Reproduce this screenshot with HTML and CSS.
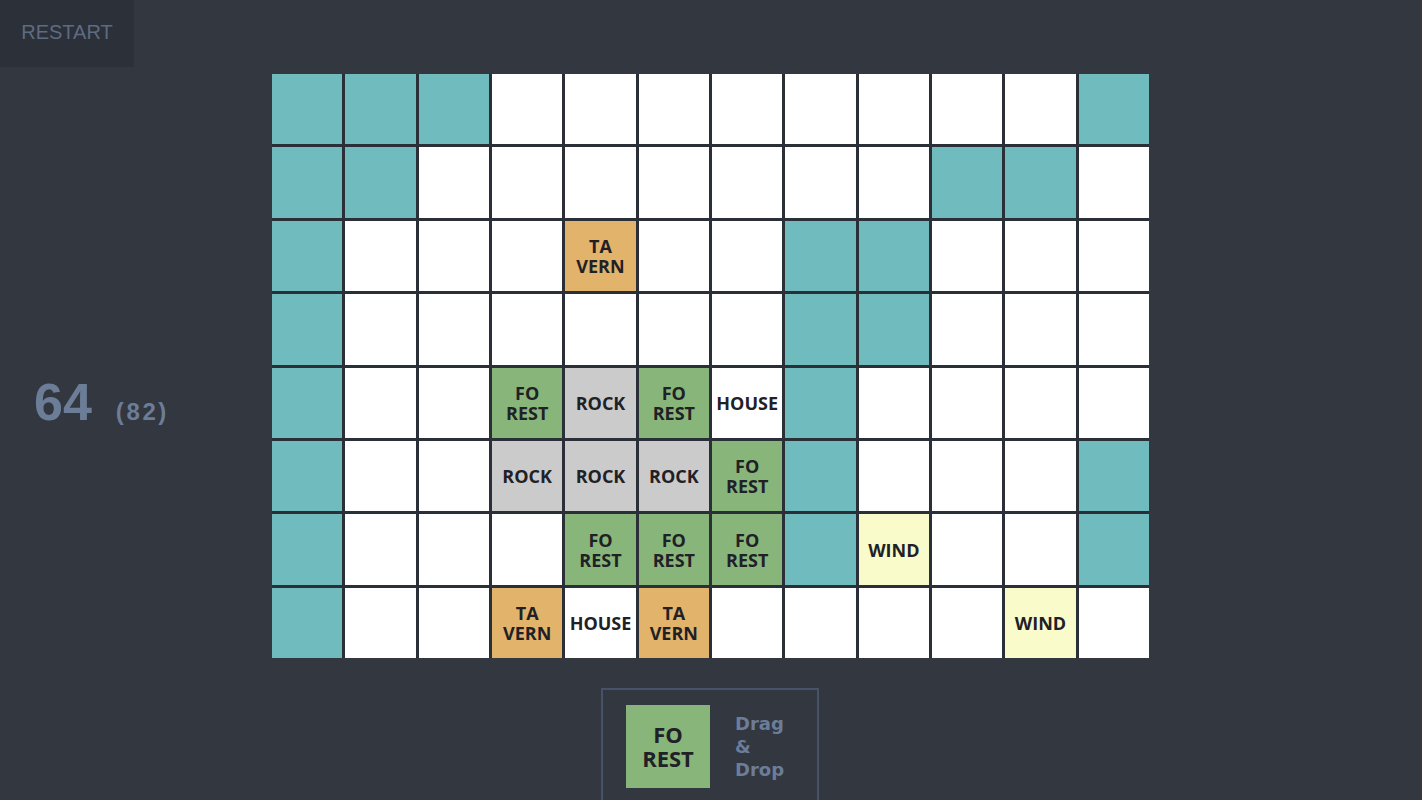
FILE: index.html
```html
<!DOCTYPE html>
<html>
<head>
<meta charset="utf-8">
<link rel="stylesheet" href="styles.css">
</head>
<body>
<header class="topbar">
  <button class="restart">RESTART</button>
</header>
<main class="board-area">
  <div class="score"><span class="score-now">64</span><span class="score-best">(82)</span></div>
  <div class="grid">
    <div class="cell water"></div><div class="cell water"></div><div class="cell water"></div><div class="cell"></div><div class="cell"></div><div class="cell"></div><div class="cell"></div><div class="cell"></div><div class="cell"></div><div class="cell"></div><div class="cell"></div><div class="cell water"></div>

    <div class="cell water"></div><div class="cell water"></div><div class="cell"></div><div class="cell"></div><div class="cell"></div><div class="cell"></div><div class="cell"></div><div class="cell"></div><div class="cell"></div><div class="cell water"></div><div class="cell water"></div><div class="cell"></div>

    <div class="cell water"></div><div class="cell"></div><div class="cell"></div><div class="cell"></div><div class="cell tavern">TA<br>VERN</div><div class="cell"></div><div class="cell"></div><div class="cell water"></div><div class="cell water"></div><div class="cell"></div><div class="cell"></div><div class="cell"></div>

    <div class="cell water"></div><div class="cell"></div><div class="cell"></div><div class="cell"></div><div class="cell"></div><div class="cell"></div><div class="cell"></div><div class="cell water"></div><div class="cell water"></div><div class="cell"></div><div class="cell"></div><div class="cell"></div>

    <div class="cell water"></div><div class="cell"></div><div class="cell"></div><div class="cell forest">FO<br>REST</div><div class="cell rock">ROCK</div><div class="cell forest">FO<br>REST</div><div class="cell house">HOUSE</div><div class="cell water"></div><div class="cell"></div><div class="cell"></div><div class="cell"></div><div class="cell"></div>

    <div class="cell water"></div><div class="cell"></div><div class="cell"></div><div class="cell rock">ROCK</div><div class="cell rock">ROCK</div><div class="cell rock">ROCK</div><div class="cell forest">FO<br>REST</div><div class="cell water"></div><div class="cell"></div><div class="cell"></div><div class="cell"></div><div class="cell water"></div>

    <div class="cell water"></div><div class="cell"></div><div class="cell"></div><div class="cell"></div><div class="cell forest">FO<br>REST</div><div class="cell forest">FO<br>REST</div><div class="cell forest">FO<br>REST</div><div class="cell water"></div><div class="cell wind">WIND</div><div class="cell"></div><div class="cell"></div><div class="cell water"></div>

    <div class="cell water"></div><div class="cell"></div><div class="cell"></div><div class="cell tavern">TA<br>VERN</div><div class="cell house">HOUSE</div><div class="cell tavern">TA<br>VERN</div><div class="cell"></div><div class="cell"></div><div class="cell"></div><div class="cell"></div><div class="cell wind">WIND</div><div class="cell"></div>
  </div>
  <div class="spacer"></div>
</main>
<footer class="tray-wrap">
  <div class="tray">
    <div class="tile forest">FO<br>REST</div>
    <div class="hint">Drag<br>&amp;<br>Drop</div>
  </div>
</footer>
</body>
</html>
```

FILE: styles.css
```css
html, body {
  margin: 0;
  padding: 0;
  background: #333740;
  height: 100%;
  overflow: hidden;
}

body {
  font-family: "Liberation Sans", Arial, sans-serif;
}

.topbar {
  height: 67px;
  display: flex;
}

.restart {
  width: 134px;
  height: 67px;
  margin: 0;
  border: none;
  background: #2c3038;
  color: #5d6b83;
  font-family: "Liberation Sans", Arial, sans-serif;
  font-size: 20px;
  padding: 0 0 2px 0;
  cursor: pointer;
}

.board-area {
  display: grid;
  grid-template-columns: 272px 877px 1fr;
  margin-top: 7px;
}

.score {
  align-self: center;
  padding: 72px 0 0 34px;
  color: #6c7d97;
  font-weight: bold;
  display: flex;
  align-items: baseline;
}

.score-now {
  font-size: 52px;
  line-height: 1;
}

.score-best {
  font-size: 24px;
  margin-left: 24px;
  letter-spacing: 2.6px;
}

.grid {
  display: grid;
  grid-template-columns: repeat(12, 1fr);
  grid-auto-rows: 70.4px;
  gap: 3px;
  background: #2b2f37;
}

.cell {
  background: #ffffff;
  display: flex;
  align-items: center;
  justify-content: center;
  text-align: center;
  font-family: "Open Sans", "Noto Sans", sans-serif;
  font-weight: 700;
  font-size: 18px;
  line-height: 20px;
  color: #1f2126;
}

.water { background: #6fbbbd; }
.forest { background: #88b57a; }
.rock { background: #cbcbcb; }
.tavern { background: #e2b36b; }
.wind { background: #f9fbca; }
.house { background: #ffffff; }

.tray-wrap {
  display: flex;
  justify-content: center;
  margin-top: 30px;
  padding-right: 2px;
}

.tray {
  width: 218px;
  height: 120px;
  border: 2px solid #45526a;
  box-sizing: border-box;
  display: flex;
  align-items: flex-start;
  padding: 15px 0 0 23px;
}

.tile {
  width: 84px;
  height: 83px;
  display: flex;
  align-items: center;
  justify-content: center;
  text-align: center;
  font-family: "Open Sans", "Noto Sans", sans-serif;
  font-weight: 700;
  font-size: 22px;
  line-height: 24px;
  color: #1f2126;
  padding-bottom: 2px;
  box-sizing: border-box;
}

.hint {
  margin-left: 25px;
  margin-top: 7px;
  color: #6c7d99;
  font-family: "DejaVu Sans", sans-serif;
  font-weight: bold;
  font-size: 18px;
  line-height: 23px;
}
```
